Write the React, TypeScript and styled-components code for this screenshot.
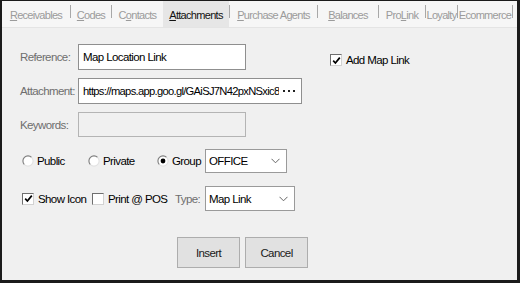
import React from "react";
import styled, { createGlobalStyle } from "styled-components";

/* ---------------- globals ---------------- */

const Global = createGlobalStyle`
  html, body {
    margin: 0;
    padding: 0;
    background: #f0f0f0;
  }
  body {
    font-family: "Liberation Sans", Arial, sans-serif;
    font-size: 11.5px;
    letter-spacing: -0.6px;
    color: #000;
  }
`;

/* ---------------- frame + tabs ---------------- */

const Frame = styled.div`
  width: 520px;
  height: 283px;
  box-sizing: border-box;
  border-style: solid;
  border-color: #1b1b1b;
  border-width: 1px 3px 3px 2px;
  background: #f0f0f0;
  display: flex;
  flex-direction: column;
`;

const TabStrip = styled.div`
  height: 26px;
  display: flex;
  align-items: stretch;
  background: #f6f6f6;
  border-bottom: 1px solid #e4e4e4;
`;

const Tab = styled.div<{ $w: number; $active?: boolean }>`
  width: ${(p) => p.$w}px;
  display: flex;
  justify-content: center;
  align-items: center;
  padding-top: 1px;
  font-size: 11px;
  letter-spacing: -0.7px;
  white-space: nowrap;
  color: ${(p) => (p.$active ? "#111" : "#9b9b9b")};
  background: ${(p) => (p.$active ? "#e6e6e6" : "transparent")};

  u {
    text-decoration: underline;
    text-underline-offset: 1px;
  }
`;

const TabSep = styled.div`
  width: 1px;
  align-self: flex-start;
  margin-top: 4px;
  height: 13px;
  background: #a8a8a8;
`;

/* ---------------- form ---------------- */

const Body = styled.div`
  flex: 1;
  padding: 16px 0 0 18px;
  display: flex;
  flex-direction: column;
`;

const TopSection = styled.div`
  display: flex;
  align-items: flex-start;
`;

const FieldGrid = styled.div`
  display: grid;
  grid-template-columns: 58px auto;
  row-gap: 8px;
  align-items: center;
`;

const Label = styled.span`
  color: #6e6e6e;
  white-space: nowrap;
`;

const TextBox = styled.div<{ $w: number; $h?: number; $disabled?: boolean }>`
  width: ${(p) => p.$w}px;
  height: ${(p) => p.$h ?? 26}px;
  box-sizing: border-box;
  display: flex;
  align-items: center;
  padding: 0 5px 0 4px;
  background: ${(p) => (p.$disabled ? "#f0f0f0" : "#fff")};
  border: 1px solid ${(p) => (p.$disabled ? "#b4b4b4" : "#8f8f8f")};
  white-space: nowrap;
  overflow: hidden;
`;

const Url = styled.span`
  flex: 1;
  min-width: 0;
  overflow: hidden;
  font-size: 11.2px;
  letter-spacing: -0.7px;
`;

const Dots = styled.span`
  flex-shrink: 0;
  display: inline-flex;
  gap: 3px;
  margin-left: 4px;
  margin-right: 1px;

  i {
    width: 2px;
    height: 2px;
    background: #222;
  }
`;

const RightCol = styled.div`
  margin: 10px 0 0 28px;
`;

const CheckItem = styled.label<{ $w?: number }>`
  display: inline-flex;
  align-items: center;
  gap: 4px;
  white-space: nowrap;
  ${(p) => (p.$w ? `width: ${p.$w}px;` : "")}
`;

const Box = styled.span`
  width: 12px;
  height: 12px;
  box-sizing: border-box;
  background: #fff;
  border: 1px solid;
  border-color: #6f6f6f #d2d2d2 #d2d2d2 #6f6f6f;
  display: inline-flex;
  align-items: center;
  justify-content: center;
`;

const OptionRow = styled.div<{ $mt: number }>`
  display: flex;
  align-items: center;
  margin-top: ${(p) => p.$mt}px;
  padding-left: 2px;
`;

const Option = styled.label<{ $w: number }>`
  width: ${(p) => p.$w}px;
  display: inline-flex;
  align-items: center;
  gap: 3px;
  white-space: nowrap;
`;

const SideLabel = styled(Label)<{ $w: number }>`
  width: ${(p) => p.$w}px;
`;

const Select = styled.div<{ $w: number; $h: number }>`
  width: ${(p) => p.$w}px;
  height: ${(p) => p.$h}px;
  box-sizing: border-box;
  display: flex;
  align-items: center;
  justify-content: space-between;
  padding: 0 6px 0 3px;
  background: #fff;
  border: 1px solid #9a9a9a;
`;

const ButtonRow = styled.div`
  display: flex;
  gap: 5px;
  margin-top: 26px;
  padding-left: 157px;
`;

const Button = styled.div`
  width: 63px;
  height: 31px;
  box-sizing: border-box;
  display: flex;
  align-items: center;
  justify-content: center;
  background: #e1e1e1;
  border: 1px solid #adadad;
  color: #1a1a1a;
`;

/* ---------------- little drawings ---------------- */

const Check = ({ on }: { on?: boolean }) => (
  <Box>
    {on && (
      <svg width="9" height="9" viewBox="0 0 9 9">
        <path d="M1.2 4.6 L3.4 7 L7.8 1.6" stroke="#000" strokeWidth="1.7" fill="none" />
      </svg>
    )}
  </Box>
);

const Radio = ({ on }: { on?: boolean }) => (
  <svg width="12" height="12" viewBox="0 0 13 13">
    <circle cx="6.5" cy="6.5" r="5.5" fill="#fff" />
    <path d="M10.4 2.6 A5.5 5.5 0 0 0 2.6 10.4" stroke="#7c7c7c" strokeWidth="1.2" fill="none" />
    <path d="M2.6 10.4 A5.5 5.5 0 0 0 10.4 2.6" stroke="#e2e2e2" strokeWidth="1.2" fill="none" />
    {on && <circle cx="6.5" cy="6.5" r="2.6" fill="#000" />}
  </svg>
);

const Chevron = () => (
  <svg width="9" height="6" viewBox="0 0 9 6">
    <path d="M0.5 0.8 L4.5 4.8 L8.5 0.8" stroke="#666" strokeWidth="1" fill="none" />
  </svg>
);

/* ---------------- page ---------------- */

const tabs: { node: React.ReactNode; w: number; active?: boolean }[] = [
  { node: <><u>R</u>eceivables</>, w: 68 },
  { node: <><u>C</u>odes</>, w: 40 },
  { node: <>C<u>o</u>ntacts</>, w: 51 },
  { node: <><u>A</u>ttachments</>, w: 66, active: true },
  { node: <><u>P</u>urchase Agents</>, w: 87 },
  { node: <><u>B</u>alances</>, w: 60 },
  { node: <>Pro<u>L</u>ink</>, w: 46 },
  { node: <>Loyalty</>, w: 31 },
  { node: <>Ecommerce</>, w: 54 },
];

export default function App() {
  return (
    <>
      <Global />
      <Frame>
        <TabStrip>
          {tabs.map((t, i) => (
            <React.Fragment key={i}>
              <Tab $w={t.w} $active={t.active}>
                <span>{t.node}</span>
              </Tab>
              {!(tabs[i + 1] && tabs[i + 1].active) && <TabSep />}
            </React.Fragment>
          ))}
        </TabStrip>

        <Body>
          <TopSection>
            <FieldGrid>
              <Label>Reference:</Label>
              <TextBox $w={168}>Map Location Link</TextBox>

              <Label>Attachment:</Label>
              <TextBox $w={224}>
                <Url>https://maps.app.goo.gl/GAiSJ7N42pxNSxic8</Url>
                <Dots>
                  <i />
                  <i />
                  <i />
                </Dots>
              </TextBox>

              <Label>Keywords:</Label>
              <TextBox $w={168} $h={25} $disabled />
            </FieldGrid>

            <RightCol>
              <CheckItem>
                <Check on />
                Add Map Link
              </CheckItem>
            </RightCol>
          </TopSection>

          <OptionRow $mt={12}>
            <Option $w={66}>
              <Radio />
              Public
            </Option>
            <Option $w={69}>
              <Radio />
              Private
            </Option>
            <Option $w={48}>
              <Radio on />
              Group
            </Option>
            <Select $w={82} $h={24}>
              OFFICE
              <Chevron />
            </Select>
          </OptionRow>

          <OptionRow $mt={13}>
            <CheckItem $w={70}>
              <Check on />
              Show Icon
            </CheckItem>
            <CheckItem $w={83}>
              <Check />
              Print @ POS
            </CheckItem>
            <SideLabel $w={30}>Type:</SideLabel>
            <Select $w={90} $h={25}>
              Map Link
              <Chevron />
            </Select>
          </OptionRow>

          <ButtonRow>
            <Button>Insert</Button>
            <Button>Cancel</Button>
          </ButtonRow>
        </Body>
      </Frame>
    </>
  );
}
